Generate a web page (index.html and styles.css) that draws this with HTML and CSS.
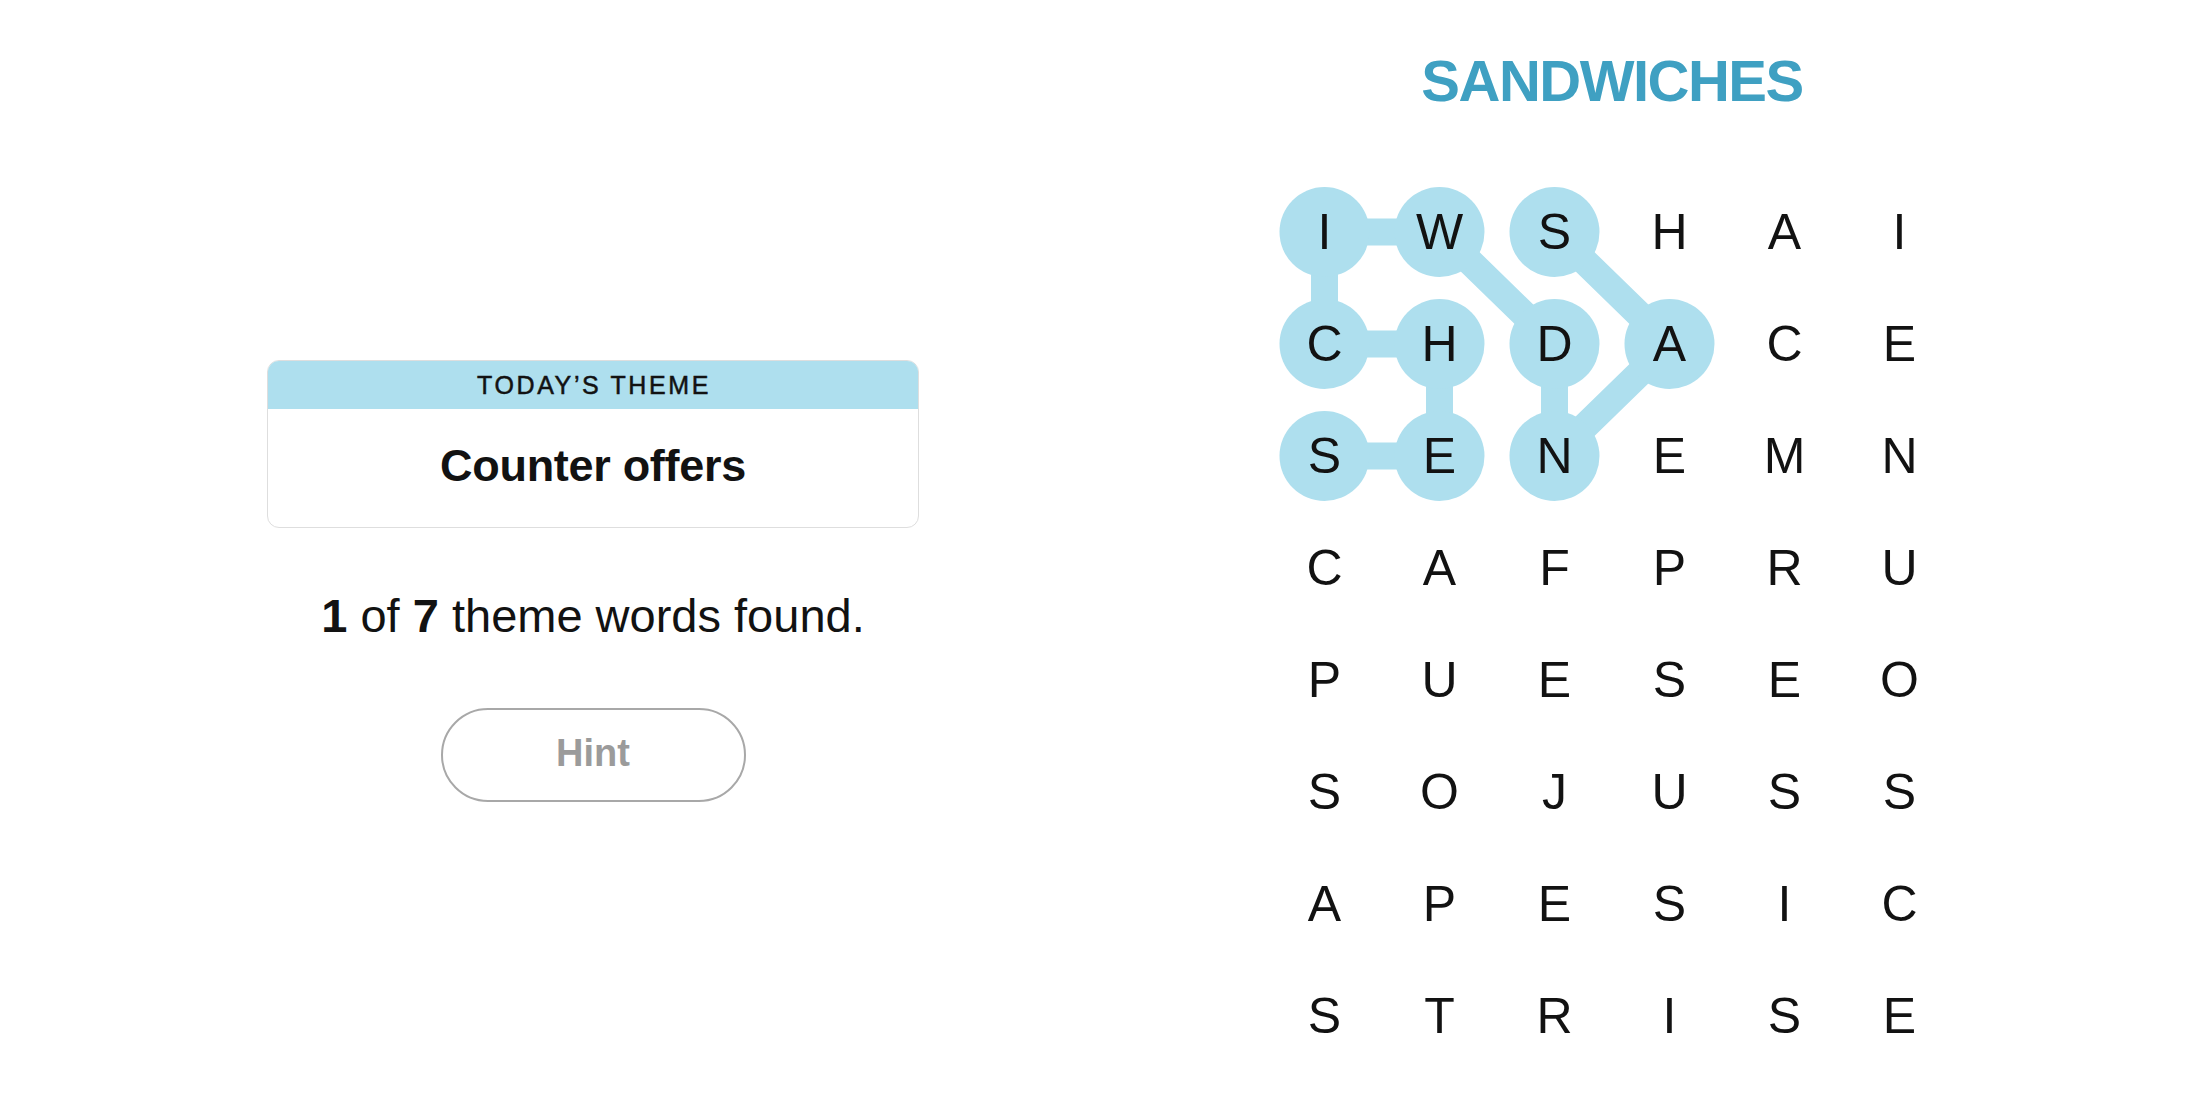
FILE: index.html
```html
<!DOCTYPE html>
<html lang="en">
<head>
<meta charset="utf-8">
<title>Strands</title>
<link rel="stylesheet" href="styles.css">
</head>
<body>
<main class="page">
  <section class="side">
    <div class="theme-card">
      <div class="theme-head">TODAY’S THEME</div>
      <div class="theme-body">Counter offers</div>
    </div>
    <p class="progress"><b>1</b> of <b>7</b> theme words found.</p>
    <button class="hint" type="button">Hint</button>
  </section>
  <section class="board">
    <h1 class="found-word">SANDWICHES</h1>
    <div class="grid">
      <svg class="trail" width="690" height="896" viewBox="0 0 690 896" aria-hidden="true">
        <polyline points="287.5,56 402.5,168 287.5,280 287.5,168 172.5,56 57.5,56 57.5,168 172.5,168 172.5,280 57.5,280" fill="none" stroke="#aedfee" stroke-width="27" stroke-linejoin="round"/>
        <g fill="#aedfee">
          <circle cx="57.5" cy="56" r="45"/>
          <circle cx="172.5" cy="56" r="45"/>
          <circle cx="287.5" cy="56" r="45"/>
          <circle cx="57.5" cy="168" r="45"/>
          <circle cx="172.5" cy="168" r="45"/>
          <circle cx="287.5" cy="168" r="45"/>
          <circle cx="402.5" cy="168" r="45"/>
          <circle cx="57.5" cy="280" r="45"/>
          <circle cx="172.5" cy="280" r="45"/>
          <circle cx="287.5" cy="280" r="45"/>
        </g>
      </svg>
      <span class="cell">I</span><span class="cell">W</span><span class="cell">S</span><span class="cell">H</span><span class="cell">A</span><span class="cell">I</span>
      <span class="cell">C</span><span class="cell">H</span><span class="cell">D</span><span class="cell">A</span><span class="cell">C</span><span class="cell">E</span>
      <span class="cell">S</span><span class="cell">E</span><span class="cell">N</span><span class="cell">E</span><span class="cell">M</span><span class="cell">N</span>
      <span class="cell">C</span><span class="cell">A</span><span class="cell">F</span><span class="cell">P</span><span class="cell">R</span><span class="cell">U</span>
      <span class="cell">P</span><span class="cell">U</span><span class="cell">E</span><span class="cell">S</span><span class="cell">E</span><span class="cell">O</span>
      <span class="cell">S</span><span class="cell">O</span><span class="cell">J</span><span class="cell">U</span><span class="cell">S</span><span class="cell">S</span>
      <span class="cell">A</span><span class="cell">P</span><span class="cell">E</span><span class="cell">S</span><span class="cell">I</span><span class="cell">C</span>
      <span class="cell">S</span><span class="cell">T</span><span class="cell">R</span><span class="cell">I</span><span class="cell">S</span><span class="cell">E</span>
    </div>
  </section>
</main>
</body>
</html>
```

FILE: styles.css
```css
* {
  box-sizing: border-box;
}

html, body {
  margin: 0;
  padding: 0;
  background: #ffffff;
}

body {
  font-family: "Liberation Sans", Arial, sans-serif;
  color: #121212;
}

.page {
  display: flex;
  width: 2200px;
  height: 1100px;
  overflow: hidden;
}

.side {
  width: 1186px;
  display: flex;
  flex-direction: column;
  align-items: center;
  padding-top: 360px;
}

.theme-card {
  width: 652px;
  height: 168px;
  border: 1px solid #dedede;
  border-radius: 12px;
  overflow: hidden;
  display: flex;
  flex-direction: column;
}

.theme-head {
  height: 48px;
  background: #aedfee;
  display: flex;
  align-items: center;
  justify-content: center;
  font-size: 25px;
  line-height: 1;
  letter-spacing: 2.6px;
  color: #121212;
  -webkit-text-stroke: 0.5px #121212;
  padding-left: 2px;
}

.theme-body {
  flex: 1;
  display: flex;
  align-items: center;
  justify-content: center;
  font-size: 45px;
  line-height: 1;
  font-weight: 700;
  letter-spacing: -0.3px;
  padding-bottom: 6px;
}

.progress {
  margin: 64px 0 0;
  font-size: 47px;
  line-height: 1;
  color: #121212;
}

.progress b {
  font-weight: 700;
}

.hint {
  margin-top: 69px;
  width: 305px;
  height: 94px;
  border: 2px solid #a8a8a8;
  border-radius: 47px;
  background: #ffffff;
  font-family: "Liberation Sans", Arial, sans-serif;
  font-size: 38px;
  line-height: 1;
  font-weight: 700;
  color: #9b9b9b;
  padding: 0 0 4px;
}

.board {
  width: 852px;
  display: flex;
  flex-direction: column;
  align-items: center;
  padding-top: 52px;
}

.found-word {
  margin: 0;
  font-size: 58px;
  line-height: 1;
  font-weight: 700;
  letter-spacing: -1.5px;
  color: #3fa0c2;
}

.grid {
  position: relative;
  margin-top: 66px;
  display: grid;
  grid-template-columns: repeat(6, 115px);
  grid-template-rows: repeat(8, 112px);
  width: 690px;
  height: 896px;
}

.trail {
  position: absolute;
  left: 0;
  top: 0;
  z-index: 0;
}

.cell {
  position: relative;
  z-index: 1;
  display: flex;
  align-items: center;
  justify-content: center;
  font-size: 50px;
  line-height: 1;
  color: #121212;
}
```
